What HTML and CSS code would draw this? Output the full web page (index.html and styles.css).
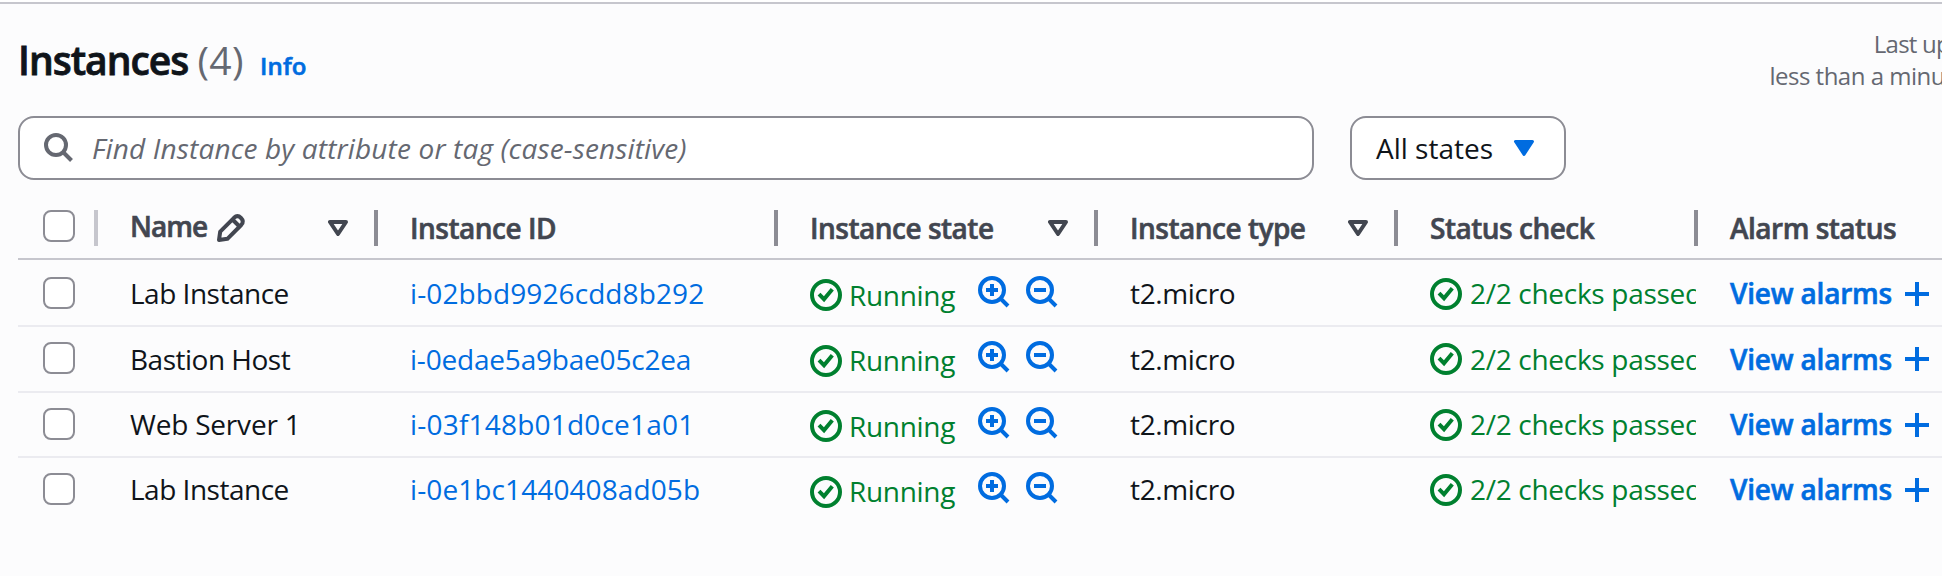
FILE: index.html
```html
<!DOCTYPE html>
<html lang="en">
<head>
<meta charset="utf-8">
<title>Instances</title>
<link rel="stylesheet" href="styles.css">
</head>
<body>
<svg class="defs" aria-hidden="true">
  <symbol id="ok" viewBox="0 0 32 32"><circle cx="16" cy="16" r="14"/><path d="M9 15.2 14 20.2 22.3 10.3"/></symbol>
  <symbol id="zin" viewBox="0 0 32 32"><circle cx="14" cy="14" r="12"/><path d="M22.5 22.5 30 30M8 14H20M14 8V20"/></symbol>
  <symbol id="zout" viewBox="0 0 32 32"><circle cx="14" cy="14" r="12"/><path d="M22.5 22.5 30 30M8 14H20"/></symbol>
  <symbol id="plus" viewBox="0 0 24 24"><path d="M0 12H24M12 0V24"/></symbol>
  <symbol id="sort" viewBox="0 0 20 16"><path d="M2 2H18L10 14Z"/></symbol>
</svg>
<main class="panel">
  <header class="head">
    <h1 class="title">Instances <span class="count">(4)</span></h1>
    <a class="info">Info</a>
    <p class="updated"><span class="updated-label">Last updated</span><br>less than a minute ago</p>
  </header>
  <div class="filters">
    <div class="search">
      <svg class="icon search-icon" viewBox="0 0 30 30"><circle cx="12" cy="12" r="10"/><path d="M19 19 27.5 27.5"/></svg>
      <span class="placeholder">Find Instance by attribute or tag (case-sensitive)</span>
    </div>
    <div class="select"><span>All states</span><svg class="caret" viewBox="0 0 20 16"><path d="M1.5 1.5H18.5L10 14.5Z"/></svg></div>
  </div>
  <div class="table">
    <div class="row hrow">
      <div class="cell check light"><i class="box"></i></div>
      <div class="cell name"><span>Name</span><svg class="icon pencil" viewBox="0 0 28 28"><path d="M2 26 3.2 17.6 17 3.8Q20.5 .5 24 4 27.5 7.5 24.2 11L10.4 24.8ZM15.5 5.5 22.5 12.5"/></svg><svg class="icon sort"><use href="#sort"/></svg></div>
      <div class="cell"><span>Instance ID</span></div>
      <div class="cell"><span>Instance state</span><svg class="icon sort"><use href="#sort"/></svg></div>
      <div class="cell"><span>Instance type</span><svg class="icon sort"><use href="#sort"/></svg></div>
      <div class="cell"><span>Status check</span></div>
      <div class="cell last"><span>Alarm status</span></div>
    </div>
    <div class="row r1">
      <div class="cell check"><i class="box"></i></div>
      <div class="cell nm"><span>Lab Instance</span></div>
      <div class="cell id"><a>i-02bbd9926cdd8b292</a></div>
      <div class="cell state"><svg class="icon ok"><use href="#ok"/></svg><span>Running</span><svg class="icon zoom"><use href="#zin"/></svg><svg class="icon zoom"><use href="#zout"/></svg></div>
      <div class="cell type"><span>t2.micro</span></div>
      <div class="cell status"><svg class="icon ok"><use href="#ok"/></svg><span>2/2 checks passed</span></div>
      <div class="cell alarm"><a>View alarms</a><svg class="icon plus"><use href="#plus"/></svg></div>
    </div>
    <div class="row r2">
      <div class="cell check"><i class="box"></i></div>
      <div class="cell nm"><span>Bastion Host</span></div>
      <div class="cell id tight"><a>i-0edae5a9bae05c2ea</a></div>
      <div class="cell state"><svg class="icon ok"><use href="#ok"/></svg><span>Running</span><svg class="icon zoom"><use href="#zin"/></svg><svg class="icon zoom"><use href="#zout"/></svg></div>
      <div class="cell type"><span>t2.micro</span></div>
      <div class="cell status"><svg class="icon ok"><use href="#ok"/></svg><span>2/2 checks passed</span></div>
      <div class="cell alarm"><a>View alarms</a><svg class="icon plus"><use href="#plus"/></svg></div>
    </div>
    <div class="row r3">
      <div class="cell check"><i class="box"></i></div>
      <div class="cell nm server"><span>Web Server 1</span></div>
      <div class="cell id wide"><a>i-03f148b01d0ce1a01</a></div>
      <div class="cell state"><svg class="icon ok"><use href="#ok"/></svg><span>Running</span><svg class="icon zoom"><use href="#zin"/></svg><svg class="icon zoom"><use href="#zout"/></svg></div>
      <div class="cell type"><span>t2.micro</span></div>
      <div class="cell status"><svg class="icon ok"><use href="#ok"/></svg><span>2/2 checks passed</span></div>
      <div class="cell alarm"><a>View alarms</a><svg class="icon plus"><use href="#plus"/></svg></div>
    </div>
    <div class="row r4">
      <div class="cell check"><i class="box"></i></div>
      <div class="cell nm"><span>Lab Instance</span></div>
      <div class="cell id"><a>i-0e1bc1440408ad05b</a></div>
      <div class="cell state"><svg class="icon ok"><use href="#ok"/></svg><span>Running</span><svg class="icon zoom"><use href="#zin"/></svg><svg class="icon zoom"><use href="#zout"/></svg></div>
      <div class="cell type"><span>t2.micro</span></div>
      <div class="cell status"><svg class="icon ok"><use href="#ok"/></svg><span>2/2 checks passed</span></div>
      <div class="cell alarm"><a>View alarms</a><svg class="icon plus"><use href="#plus"/></svg></div>
    </div>
  </div>
</main>
</body>
</html>
```
FILE: styles.css
```css
* { box-sizing: border-box; }
body {
  margin: 0;
  height: 576px;
  overflow: hidden;
  background: #fff;
  font: 400 28px/40px "Open Sans", "Noto Sans", sans-serif;
  color: #0f141a;
}
p, h1 { margin: 0; }
a { color: #006ce0; text-decoration: none; }
svg { flex: none; overflow: visible; }
.defs { position: absolute; width: 0; height: 0; }
.icon { fill: none; stroke: currentColor; stroke-width: 4; }

.panel {
  margin-top: 2px;
  height: 574px;
  border-top: 2px solid #c6c6cd;
  background: #fcfcfd;
  overflow: hidden;
}

.head {
  display: flex;
  align-items: flex-start;
  width: 2011px;
  height: 112px;
  padding-left: 18px;
}
.title {
  padding-top: 32px;
  font-size: 39px;
  line-height: 48px;
  font-weight: 600;
  letter-spacing: -1px;
  -webkit-text-stroke: .8px;
  white-space: nowrap;
}
.count { font-weight: 400; color: #656871; letter-spacing: .4px; -webkit-text-stroke: 0; }
.info {
  padding: 46px 0 0 16px;
  font-size: 24px;
  line-height: 32px;
  font-weight: 600;
  letter-spacing: .2px;
  -webkit-text-stroke: .6px;
}
.updated {
  margin-left: auto;
  padding-top: 24px;
  font-size: 24px;
  line-height: 32px;
  letter-spacing: -.5px;
  color: #656871;
  text-align: right;
  white-space: nowrap;
}
.updated-label { letter-spacing: -.75px; }

.filters { display: flex; gap: 36px; padding-left: 18px; }
.search, .select {
  display: flex;
  align-items: center;
  height: 64px;
  border: 2px solid #8c8c94;
  border-radius: 16px;
  background: #fff;
}
.search { width: 1296px; padding-left: 24px; color: #656871; }
.search-icon { width: 30px; height: 30px; }
.placeholder { margin-left: 18px; font-style: italic; letter-spacing: .15px; }
.select { width: 216px; padding-left: 24px; }
.caret {
  width: 20px;
  height: 16px;
  margin: 0 0 0 21px;
  fill: #006ce0;
  stroke: #006ce0;
  stroke-width: 3;
  stroke-linejoin: round;
}

.table { margin-left: 18px; }
.row {
  display: grid;
  grid-template-columns: 80px 280px 400px 320px 300px 300px 300px;
  border-bottom: 2px solid #ebebf0;
}
.cell {
  display: flex;
  align-items: flex-start;
  min-width: 0;
  padding: 11px 0 0 32px;
  overflow: hidden;
  white-space: nowrap;
}
.box {
  flex: none;
  width: 32px;
  height: 32px;
  border: 2px solid #8c8c94;
  border-radius: 8px;
  background: #fff;
}
.check { padding: 15px 0 0 25px; }

.hrow {
  height: 80px;
  padding-top: 30px;
  border-color: #c6c6cd;
  font-weight: 600;
  letter-spacing: -.5px;
  -webkit-text-stroke: .6px;
  color: #424650;
}
.hrow .cell { height: 36px; padding-top: 0; border-right: 4px solid #8c8c94; line-height: 36px; overflow: visible; }
.hrow .light { border-color: #c6c6cd; }
.hrow .last { border: 0; }
.hrow .name { line-height: 32px; letter-spacing: -1px; }
.sort { width: 20px; height: 16px; margin: 10px 26px 0 auto; stroke-linejoin: round; }
.pencil { width: 28px; height: 28px; margin: 4px 0 0 10px; stroke-linejoin: round; }

.r1 { height: 67px; padding-top: 2px; }
.r2 { height: 66px; }
.r3 { height: 65px; }
.r4 { height: 67px; border-bottom: 0; }
.r2 .nm, .r2 .id, .r2 .type, .r2 .status span, .r2 .alarm a { position: relative; top: 1px; }
.nm { letter-spacing: -.5px; }
.server { letter-spacing: -.2px; }
.id { letter-spacing: .1px; }
.tight { letter-spacing: -.2px; }
.wide { letter-spacing: .2px; }
.type { letter-spacing: -.35px; }
.state, .status { padding-top: 0; color: #00802f; }
.ok { width: 32px; height: 32px; margin: 17px 7px 0 0; }
.r2 .state .ok, .r4 .state .ok { margin-top: 18px; }
.state span { padding-top: 13px; letter-spacing: -.3px; }
.zoom { width: 32px; height: 32px; margin: 14px 0 0 23px; color: #006ce0; }
.zoom + .zoom { margin-left: 16px; }
.status { margin-right: 2px; }
.status .ok { margin: 16px 8px 0 0; }
.status span { padding-top: 11px; letter-spacing: -.3px; }
.alarm { font-weight: 600; letter-spacing: -.2px; -webkit-text-stroke: .6px; color: #006ce0; }
.plus { width: 24px; height: 24px; margin: 9px 0 0 12.5px; }
```
